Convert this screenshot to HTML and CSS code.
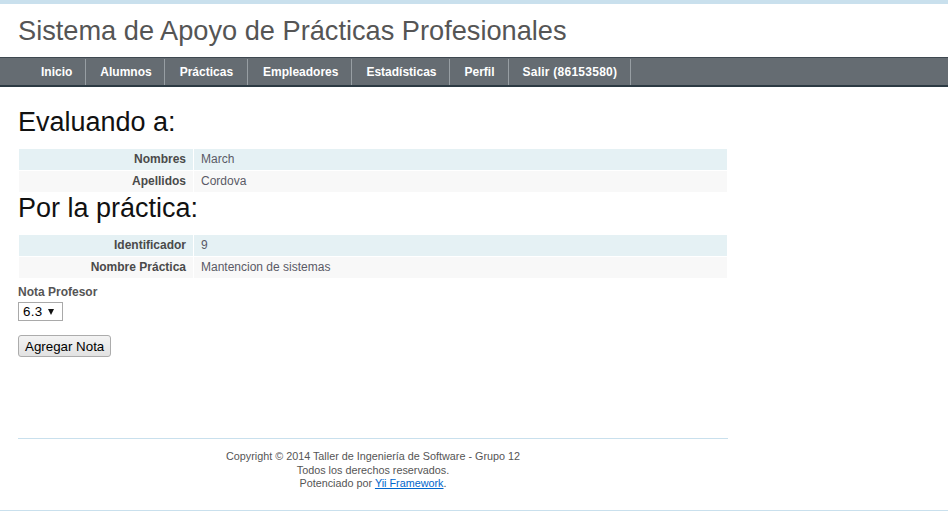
FILE: index.html
```html
<!DOCTYPE html>
<html lang="es">
<head>
<meta charset="utf-8">
<title>Sistema de Apoyo de Prácticas Profesionales</title>
<link rel="stylesheet" href="styles.css">
</head>
<body>
<div class="page">
  <header class="header">
    <div class="logo">Sistema de Apoyo de Prácticas Profesionales</div>
  </header>
  <nav class="mainmenu">
    <ul class="menu-list">
      <li class="menu-item"><a class="menu-link" href="#">Inicio</a></li>
      <li class="menu-item"><a class="menu-link" href="#">Alumnos</a></li>
      <li class="menu-item"><a class="menu-link" href="#">Prácticas</a></li>
      <li class="menu-item"><a class="menu-link" href="#">Empleadores</a></li>
      <li class="menu-item"><a class="menu-link" href="#">Estadísticas</a></li>
      <li class="menu-item"><a class="menu-link" href="#">Perfil</a></li>
      <li class="menu-item"><a class="menu-link" href="#">Salir (86153580)</a></li>
    </ul>
  </nav>
  <main class="content">
    <h1 class="section-title">Evaluando a:</h1>
    <table class="detail-view">
      <tr class="odd"><th>Nombres</th><td>March</td></tr>
      <tr class="even"><th>Apellidos</th><td>Cordova</td></tr>
    </table>
    <h1 class="section-title">Por la práctica:</h1>
    <table class="detail-view">
      <tr class="odd"><th>Identificador</th><td>9</td></tr>
      <tr class="even"><th>Nombre Práctica</th><td>Mantencion de sistemas</td></tr>
    </table>
    <form class="form">
      <div class="form-row">
        <label class="field-label" for="nota">Nota Profesor</label>
        <div class="select-wrap">
          <select class="select" id="nota">
            <option>6.3</option>
          </select>
        </div>
      </div>
      <div class="form-row buttons">
        <button class="btn" type="button">Agregar Nota</button>
      </div>
    </form>
  </main>
  <footer class="footer">
    Copyright © 2014 Taller de Ingeniería de Software - Grupo 12<br>
    Todos los derechos reservados.<br>
    Potenciado por <a class="footer-link" href="#">Yii Framework</a>.
  </footer>
</div>
</body>
</html>
```
FILE: styles.css
```css
* { box-sizing: border-box; }

body {
  margin: 0;
  font: 13.33px "Liberation Sans", Arial, sans-serif;
  color: #555;
  background: #fff;
}

.page {
  border-bottom: 1px solid #c9e0ed;
}

.header {
  border-top: 4px solid #c9e0ed;
}

.logo {
  padding: 11px 18px;
  font-size: 27.2px;
  line-height: 31px;
  color: #555;
}

.mainmenu {
  height: 30px;
  background: #656c72;
  border-top: 1px solid #3e4850;
  border-bottom: 2px solid #2c3a43;
}

.menu-list {
  list-style: none;
  margin: 0;
  padding: 0 0 0 27px;
  display: flex;
  height: 100%;
}

.menu-item {
  display: flex;
  align-items: center;
  margin-top: 1px;
  border-right: 1px solid #979ea3;
}

.menu-link {
  padding: 0 13px 0 14px;
  color: #fff;
  font-size: 12px;
  font-weight: bold;
  text-decoration: none;
  margin-top: -1px;
}

.menu-item:nth-child(2) .menu-link {
  padding-right: 12px;
}

.menu-item:nth-child(3) .menu-link {
  padding-left: 15px;
  padding-right: 14px;
}

.menu-item:nth-child(4) .menu-link {
  padding-left: 15px;
}

.menu-item:last-child .menu-link {
  letter-spacing: 0.25px;
}

.content {
  width: 728px;
  padding: 20px 0 20px 18px;
}

.section-title {
  margin: 0 0 11px;
  font-size: 27px;
  line-height: 30px;
  font-weight: normal;
  color: #111;
}

.detail-view {
  width: 100%;
  border-collapse: collapse;
  background: #fff;
}

.detail-view th,
.detail-view td {
  font-size: 12px;
  line-height: 13px;
  padding: 4px 7px;
  border: 1px solid #fff;
  vertical-align: top;
}

.detail-view th {
  width: 175px;
  text-align: right;
  font-weight: bold;
  color: #4a4a4a;
}

.detail-view td {
  text-align: left;
  color: #5a5a66;
}

.detail-view .odd { background: #e5f1f4; }
.detail-view .even { background: #f8f8f8; }

.form {
  margin-top: 6px;
}

.form-row {
  display: flex;
  flex-direction: column;
  align-items: flex-start;
}

.field-label {
  font-size: 12px;
  line-height: 15px;
  font-weight: bold;
  color: #555;
}

.select-wrap {
  position: relative;
  margin-top: 2px;
}

.select {
  appearance: none;
  -webkit-appearance: none;
  display: block;
  width: 45px;
  height: 19px;
  margin: 0;
  padding: 0 0 0 4px;
  border: 1px solid #a9a9a9;
  border-radius: 0;
  background: #fff;
  font: 13.33px "Liberation Sans", Arial, sans-serif;
  letter-spacing: 0.3px;
  color: #000;
}

.select-wrap::after {
  content: "";
  position: absolute;
  right: 9px;
  top: 7px;
  border-left: 3.5px solid transparent;
  border-right: 3.5px solid transparent;
  border-top: 6px solid #111;
  pointer-events: none;
}

.buttons {
  margin-top: 14px;
}

.btn {
  height: 22px;
  padding: 0 6px;
  font: 13.33px "Liberation Sans", Arial, sans-serif;
  color: #000;
  border: 1px solid #acacac;
  border-radius: 3px;
  background: linear-gradient(#f3f3f3, #e2e2e2);
}

.footer {
  width: 710px;
  margin: 61px 18px 10px;
  padding: 11px 0 9px;
  border-top: 1px solid #c9e0ed;
  text-align: center;
  font-size: 10.8px;
  line-height: 13.5px;
  color: #555;
}

.footer-link {
  color: #06c;
  text-decoration: underline;
}
```
